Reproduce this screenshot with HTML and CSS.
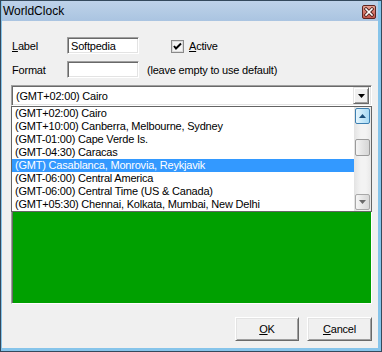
FILE: index.html
```html
<!DOCTYPE html>
<html>
<head>
<meta charset="utf-8">
<link rel="stylesheet" href="styles.css">
</head>
<body>
<div class="window">
  <div class="titlebar">
    <span class="title">WorldClock</span>
    <span class="close">
      <svg width="14" height="14" viewBox="0 0 14 14">
        <defs>
          <linearGradient id="cg" x1="0" y1="0" x2="0" y2="1">
            <stop offset="0" stop-color="#e9a89b"/>
            <stop offset="0.5" stop-color="#d4766a"/>
            <stop offset="1" stop-color="#c2554a"/>
          </linearGradient>
        </defs>
        <rect x="0.5" y="0.5" width="13" height="13" rx="1.5" fill="url(#cg)" stroke="#5e2520"/>
        <path d="M4 4 L10 10 M10 4 L4 10" stroke="#4a1e1a" stroke-width="3.2" stroke-linecap="square"/>
        <path d="M4 4 L10 10 M10 4 L4 10" stroke="#ffffff" stroke-width="1.6" stroke-linecap="square"/>
      </svg>
    </span>
  </div>
  <div class="client">
    <div class="row">
      <span class="lbl"><u>L</u>abel</span>
      <span class="edit">Softpedia</span>
      <span class="check">
        <svg width="13" height="13" viewBox="0 0 13 13">
          <rect x="0.5" y="0.5" width="12" height="12" fill="#ffffff" stroke="#8a8a8a"/>
          <rect x="1.5" y="1.5" width="10" height="10" fill="#f4f4f4" stroke="#dcdcdc"/>
          <path d="M3 6 L5 8.5 L10 3.5" fill="none" stroke="#000" stroke-width="2"/>
        </svg>
      </span>
      <span class="chklbl"><u>A</u>ctive</span>
    </div>
    <div class="row row2">
      <span class="lbl">Format</span>
      <span class="edit"></span>
      <span class="hint">(leave empty to use default)</span>
    </div>
    <div class="combo-wrap">
      <div class="combo">
        <span class="combo-text">(GMT+02:00) Cairo</span>
        <span class="dd-btn">
          <svg width="7" height="4" viewBox="0 0 7 4"><path d="M0 0 H7 L3.5 4 Z" fill="#000"/></svg>
        </span>
      </div>
      <div class="dropdown">
        <ul class="items">
          <li>(GMT+02:00) Cairo</li>
          <li>(GMT+10:00) Canberra, Melbourne, Sydney</li>
          <li>(GMT-01:00) Cape Verde Is.</li>
          <li>(GMT-04:30) Caracas</li>
          <li class="sel">(GMT) Casablanca, Monrovia, Reykjavik</li>
          <li>(GMT-06:00) Central America</li>
          <li>(GMT-06:00) Central Time (US &amp; Canada)</li>
          <li>(GMT+05:30) Chennai, Kolkata, Mumbai, New Delhi</li>
        </ul>
        <div class="vscroll">
          <span class="sb-btn sb-up">
            <svg width="7" height="4" viewBox="0 0 7 4"><path d="M0 4 H7 L3.5 0 Z" fill="#1c4f7a"/></svg>
          </span>
          <span class="sb-track">
            <span class="sb-thumb"></span>
          </span>
          <span class="sb-btn sb-down">
            <svg width="7" height="4" viewBox="0 0 7 4"><path d="M0 0 H7 L3.5 4 Z" fill="#6a6a6a"/></svg>
          </span>
        </div>
      </div>
    </div>
    <div class="panel"></div>
    <div class="buttons">
      <span class="btn btn-ok"><u>O</u>K</span>
      <span class="btn btn-cancel"><u>C</u>ancel</span>
    </div>
  </div>
</div>
</body>
</html>
```
FILE: styles.css
```css
html, body {
  margin: 0;
  padding: 0;
  background: #ffffff;
}

.window {
  box-sizing: border-box;
  width: 382px;
  height: 352px;
  border: 1px solid #34495c;
  background: #86c4ea;
  padding: 0 3px 3px 1px;
  display: flex;
  flex-direction: column;
  font-family: "Liberation Sans", Arial, sans-serif;
  font-size: 11px;
  letter-spacing: -0.2px;
  color: #000;
}

.titlebar {
  height: 20px;
  flex: none;
  display: flex;
  align-items: center;
  justify-content: space-between;
  padding: 0 2px 0 1px;
  background: linear-gradient(#bed2e9, #b2cae4 60%, #aac4e1);
}

.title {
  font-size: 12px;
  letter-spacing: 0;
  color: #000;
  line-height: 20px;
}

.close {
  display: flex;
  margin-top: 1px;
}

.client {
  flex: 1;
  background: #f0f0f0;
  padding: 16px 6px 7px 9px;
  display: flex;
  flex-direction: column;
}

.row {
  display: flex;
  align-items: center;
  height: 17px;
  flex: none;
}

.row2 {
  margin-top: 7px;
}

.lbl {
  width: 55px;
  padding-left: 1px;
}

.edit {
  box-sizing: border-box;
  width: 72px;
  height: 17px;
  background: #fff;
  border: 1px solid;
  border-color: #a0a0a0 #ffffff #ffffff #a0a0a0;
  box-shadow: inset 1px 1px 0 #696969, inset -1px -1px 0 #e3e3e3;
  padding: 1px 0 0 3px;
  line-height: 14px;
}

.check {
  display: flex;
  margin-left: 32px;
  margin-top: 1px;
}

.chklbl {
  margin-left: 5px;
}

.hint {
  margin-left: 8px;
}

.combo-wrap {
  position: relative;
  margin-top: 7px;
  flex: none;
}

.combo {
  box-sizing: border-box;
  height: 21px;
  background: #fff;
  border: 1px solid;
  border-color: #a0a0a0 #ffffff #ffffff #a0a0a0;
  box-shadow: inset 1px 1px 0 #696969, inset -1px -1px 0 #e3e3e3;
  display: flex;
  align-items: center;
  justify-content: space-between;
  padding: 0 2px 0 4px;
}

.dd-btn {
  box-sizing: border-box;
  width: 16px;
  height: 17px;
  background: #f0f0f0;
  border: 1px solid;
  border-color: #e3e3e3 #696969 #696969 #e3e3e3;
  box-shadow: inset 1px 1px 0 #ffffff, inset -1px -1px 0 #a0a0a0;
  display: flex;
  align-items: center;
  justify-content: center;
}

.dropdown {
  position: absolute;
  left: 0;
  top: 21px;
  box-sizing: border-box;
  width: 361px;
  height: 106px;
  background: #fff;
  border: 1px solid #646464;
  display: flex;
}

.items {
  list-style: none;
  margin: 0;
  padding: 0;
  flex: 1;
}

.items li {
  height: 13px;
  line-height: 13px;
  padding-left: 3px;
  white-space: nowrap;
}

.items li.sel {
  background: #3399ff;
  color: #fff;
}

.vscroll {
  width: 17px;
  display: flex;
  flex-direction: column;
  background: linear-gradient(90deg, #e3e3e3, #f3f3f3 40%, #f3f3f3 70%, #e8e8e8);
}

.sb-btn {
  box-sizing: border-box;
  height: 17px;
  margin: 0 1px;
  display: flex;
  align-items: center;
  justify-content: center;
  border-radius: 2px;
  flex: none;
}

.sb-up {
  margin-top: 1px;
  height: 16px;
  border: 1px solid #3c7fb1;
  background: linear-gradient(90deg, #e6f5fd, #c6e8f9 50%, #a9daf4);
}

.sb-down {
  height: 16px;
  margin-bottom: 1px;
  border: 1px solid #a8a8a8;
  background: linear-gradient(90deg, #f6f6f6, #e6e6e6 50%, #d8d8d8);
}

.sb-track {
  flex: 1;
  padding-top: 15px;
}

.sb-thumb {
  display: block;
  box-sizing: border-box;
  height: 17px;
  margin: 0 1px;
  border: 1px solid #9b9b9b;
  border-radius: 2px;
  background: linear-gradient(90deg, #f4f4f4, #e4e4e4 50%, #d6d6d6);
}

.panel {
  box-sizing: border-box;
  margin-top: 6px;
  height: 192px;
  flex: none;
  background: #00a000;
  border: 1px solid;
  border-color: #a0a0a0 #ffffff #ffffff #a0a0a0;
  box-shadow: inset 1px 1px 0 #696969;
}

.buttons {
  margin-top: 13px;
  display: flex;
  justify-content: flex-end;
  gap: 8px;
  flex: none;
}

.btn {
  box-sizing: border-box;
  height: 24px;
  display: flex;
  align-items: center;
  justify-content: center;
  background: #f0f0f0;
  border: 1px solid;
  border-color: #ffffff #696969 #696969 #ffffff;
  box-shadow: inset 1px 1px 0 #e3e3e3, inset -1px -1px 0 #a0a0a0;
  font-size: 11px;
}

.btn-ok {
  width: 64px;
}

.btn-cancel {
  width: 65px;
}
```
